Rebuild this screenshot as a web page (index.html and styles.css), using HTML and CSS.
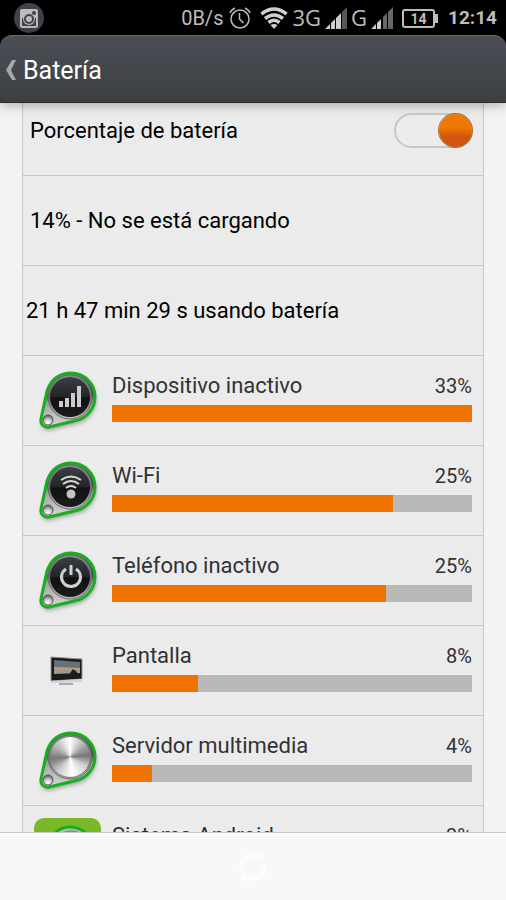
FILE: index.html
```
<!DOCTYPE html>
<html lang="es">
<head>
  <meta charset="UTF-8">
  <meta name="viewport" content="width=device-width, initial-scale=1">
  <title>Batería</title>
  <link rel="stylesheet" href="styles.css">
</head>
<body>

<!-- shared gradients and the badge base -->
<svg class="defs" width="0" height="0" aria-hidden="true">
  <defs>
    <linearGradient id="metal" x1="0" y1="0" x2="0" y2="1">
      <stop offset="0" stop-color="#77797b"/>
      <stop offset="0.4" stop-color="#3c3f41"/>
      <stop offset="0.55" stop-color="#a0a2a3"/>
      <stop offset="1" stop-color="#d8d8d8"/>
    </linearGradient>
    <linearGradient id="ring" x1="0" y1="0" x2="0" y2="1">
      <stop offset="0" stop-color="#8d9092"/>
      <stop offset="0.5" stop-color="#6a6d6f"/>
      <stop offset="1" stop-color="#c2c4c5"/>
    </linearGradient>
    <linearGradient id="dark" x1="0" y1="0" x2="0" y2="1">
      <stop offset="0" stop-color="#3c3f43"/>
      <stop offset="0.5" stop-color="#222427"/>
      <stop offset="0.52" stop-color="#101113"/>
      <stop offset="1" stop-color="#1b1c1e"/>
    </linearGradient>
    <radialGradient id="ball" cx="0.5" cy="0.8" r="0.8">
      <stop offset="0" stop-color="#ffffff"/>
      <stop offset="0.5" stop-color="#c4c5c6"/>
      <stop offset="1" stop-color="#4c4e50"/>
    </radialGradient>
    <symbol id="badge" viewBox="0 0 68 70">
      <path d="M13 24C17 12 26 6 37 6c13 0 24 10 24 24 0 12-9 22-21 24l-25 6c-5 1-9-3-8-8z" fill="#000" opacity="0.35" transform="translate(1 3)" filter="blur(2px)"/>
      <path d="M13 24C17 12 26 6 37 6c13 0 24 10 24 24 0 12-9 22-21 24l-25 6c-5 1-9-3-8-8z" fill="url(#metal)" stroke="#17b01c" stroke-width="3"/>
      <circle cx="36" cy="30" r="22" fill="url(#ring)" stroke="#66696b"/>
      <circle cx="14" cy="53" r="5" fill="url(#ball)" stroke="#555"/>
    </symbol>
  </defs>
</svg>

<div class="status">
  <svg class="insta" viewBox="0 0 30 32" aria-hidden="true">
    <circle cx="15" cy="16" r="15" fill="#3f4248"/>
    <path d="M8 7h14q2 0 2 2v15q0 2-2 2H8q-2 0-2-2V9q0-2 2-2z" fill="#bbb"/>
    <path d="M8 16h3v2a4 4 0 0 0 8 0v-2h3v8H8z" fill="#3f4248"/>
    <circle cx="15" cy="17" r="6" fill="#bbb"/>
    <circle cx="15" cy="17" r="4" fill="none" stroke="#3f4248" stroke-width="2"/>
    <circle cx="20" cy="11" r="2" fill="#3f4248"/>
  </svg>
  <span class="speed">0B/s</span>
  <svg class="alarm" viewBox="0 0 22 22" fill="none" stroke="#bdbdbd" stroke-width="1.5" aria-hidden="true">
    <circle cx="11" cy="12" r="9"/>
    <path d="M10.500 6v6l4 4M1 6q1-3 5-5M21 6q-1-3-5-5"/>
  </svg>
  <svg class="wifi" viewBox="0 0 28 22" fill="none" stroke="#cfcfcf" stroke-width="3.600" aria-hidden="true">
    <path d="M1.500 7Q14-3 26.500 7M5 11.500q9-7 18 0M8.500 15.500q5.500-4.500 11 0"/>
    <path d="M10.500 18q3.500-2 7 0L14 22z" fill="#cfcfcf" stroke="none"/>
  </svg>
  <span class="net">3G</span>
  <svg class="bars" viewBox="0 0 22 22" aria-hidden="true">
    <path d="M0 22l5-5v5zM6 16l4-4v10H6zM11 11l5-5v16h-5z" fill="#cfcfcf"/>
    <path d="M17 5l5-5v22h-5z" fill="#55575a"/>
  </svg>
  <span class="net">G</span>
  <svg class="bars" viewBox="0 0 22 22" aria-hidden="true">
    <path d="M0 22l5-5v5zM6 16l4-4v10H6z" fill="#cfcfcf"/>
    <path d="M12 10l4-4v16h-4zM17 5l5-5v22h-5z" fill="#66686c"/>
  </svg>
  <span class="battery">14</span>
  <span class="clock">12:14</span>
</div>

<header class="title-bar">
  <a href="#" class="back">
    <svg viewBox="0 0 10 20" aria-hidden="true"><path d="M6 0h4L5 10l5 10H6L0 10z" fill="#a5a6a7"/></svg>
    <h1>Batería</h1>
  </a>
</header>

<main class="content">
  <div class="list">
    <div class="row toggle-row">
      <label for="percent">Porcentaje de batería</label>
      <input type="checkbox" id="percent" class="switch" checked>
    </div>
    <div class="row charge">14% - No se está cargando</div>
    <div class="row elapsed">21 h 47 min 29 s usando batería</div>

    <div class="row usage">
      <svg class="icon" viewBox="0 0 68 70" aria-hidden="true">
        <use href="#badge"/>
        <circle cx="36" cy="30" r="20" fill="url(#dark)"/>
        <path d="M25 34h4v6h-4zM31 31h4v9h-4zM37 26h4v14h-4zM43 19h4v21h-4z" fill="#ccc"/>
      </svg>
      <div class="info">
        <div class="names"><span>Dispositivo inactivo</span><span class="value">33%</span></div>
        <div class="track"><div class="fill" style="width: 100%"></div></div>
      </div>
    </div>

    <div class="row usage">
      <svg class="icon" viewBox="0 0 68 70" aria-hidden="true">
        <use href="#badge"/>
        <circle cx="36" cy="30" r="20" fill="url(#dark)"/>
        <circle cx="37" cy="37" r="4.500" fill="#c4c4c4"/>
        <path d="M27 23q10-7 20 0M29 27q8-6 16 0M32 31q5-4 10 0" fill="none" stroke="#d8d8d8" stroke-width="2"/>
      </svg>
      <div class="info">
        <div class="names"><span>Wi-Fi</span><span class="value">25%</span></div>
        <div class="track"><div class="fill" style="width: 78%"></div></div>
      </div>
    </div>

    <div class="row usage">
      <svg class="icon" viewBox="0 0 68 70" aria-hidden="true">
        <use href="#badge"/>
        <circle cx="36" cy="30" r="20" fill="url(#dark)"/>
        <path d="M32 22a9.500 9.500 0 1 0 10 0M37 18v10" fill="none" stroke="#d0d0d0" stroke-width="3"/>
      </svg>
      <div class="info">
        <div class="names"><span>Teléfono inactivo</span><span class="value">25%</span></div>
        <div class="track"><div class="fill" style="width: 76%"></div></div>
      </div>
    </div>

    <div class="row usage">
      <svg class="icon" viewBox="0 0 68 70" aria-hidden="true">
        <path d="M17 20l31 2v20l-31 2z" fill="#17191b" stroke="#999"/>
        <path d="M20 23l26 2v14l-26 1z" fill="#6d7072"/>
        <path d="M20 30l26 1v3H20z" fill="#a3a5a6"/>
        <path d="M20 33h26" stroke="#d8843a"/>
        <path d="M20 34h26v3l-26 1z" fill="#a59a80"/>
        <path d="M20 37l26-1v4l-26 2zM36 40v-4l3-4 4 3v5z" fill="#1b1c1e"/>
        <path d="M17 44l31-2v3l-31 1z" fill="#d2d2d2"/>
        <path d="M25 46h14v2H25z" fill="#aaa"/>
      </svg>
      <div class="info">
        <div class="names"><span>Pantalla</span><span class="value">8%</span></div>
        <div class="track"><div class="fill" style="width: 24%"></div></div>
      </div>
    </div>

    <div class="row usage">
      <svg class="icon" viewBox="0 0 68 70" aria-hidden="true">
        <use href="#badge"/>
        <foreignObject x="15" y="9" width="42" height="42"><div class="brushed"></div></foreignObject>
      </svg>
      <div class="info">
        <div class="names"><span>Servidor multimedia</span><span class="value">4%</span></div>
        <div class="track"><div class="fill" style="width: 11%"></div></div>
      </div>
    </div>

    <div class="row usage">
      <svg class="icon" viewBox="0 0 68 70" aria-hidden="true">
        <rect x="0" y="1" width="67" height="67" rx="10" fill="#79b829"/>
        <path d="M18 22C21 14 28 10 36 10c12 0 22 9 22 20 0 10-7 18-17 20l-20 4c-5 1-7-2-6-6z" fill="#b9bbbc" stroke="#17b01c" stroke-width="3"/>
        <circle cx="37" cy="31" r="17" fill="#d0d2d3" stroke="#66696b"/>
      </svg>
      <div class="info">
        <div class="names"><span>Sistema Android</span><span class="value">3%</span></div>
        <div class="track"><div class="fill" style="width: 8%"></div></div>
      </div>
    </div>
  </div>
</main>

<footer class="bottom-bar">
  <button type="button" class="refresh" aria-label="Actualizar">
    <svg viewBox="0 0 32 32" fill="none" stroke="#fcfcfc" stroke-width="5" aria-hidden="true">
      <path d="M5 18A11 11 0 0 1 22 7M27 14a11 11 0 0 1-17 11"/>
      <path d="M20 2l8 1-3 10zM12 30l-8-1 3-10z" fill="#fcfcfc" stroke="none"/>
    </svg>
  </button>
</footer>

</body>
</html>
```
FILE: styles.css
```
* {
  box-sizing: border-box;
}
body {
  margin: 0;
  height: 100vh;
  display: flex;
  flex-direction: column;
  overflow: hidden;
  background-color: #000;
  font-family: Roboto, sans-serif;
}
.defs {
  position: absolute;
}

/* status bar */
.status {
  flex: none;
  height: 35px;
  display: flex;
  align-items: center;
  padding: 0 9px 0 14px;
  color: #bdbdbd;
}
.status svg {
  flex: none;
}
.insta {
  width: 30px;
  height: 32px;
  margin-right: auto;
}
.speed {
  font-size: 20px;
  margin-right: 6px;
}
.alarm {
  width: 22px;
  height: 22px;
  margin-right: 9px;
}
.wifi {
  width: 28px;
  height: 22px;
  margin-right: 4px;
}
.net {
  font-family: "Open Sans", sans-serif;
  font-size: 22px;
  line-height: 35px;
  margin-right: 4px;
}
.bars {
  width: 22px;
  height: 22px;
  margin-right: 4px;
}
.battery {
  position: relative;
  width: 33px;
  height: 19px;
  margin: 1px 13px 0 5px;
  border: 2px solid #bdbdbd;
  border-radius: 3px;
  font-size: 14px;
  font-weight: bold;
  line-height: 16px;
  text-align: center;
}
.battery::after {
  content: "";
  position: absolute;
  top: 3px;
  right: -5px;
  width: 4px;
  height: 9px;
  background-color: #bdbdbd;
}
.clock {
  font-size: 19px;
  font-weight: bold;
}

/* title */
.title-bar {
  flex: none;
  position: relative;
  height: 68px;
  padding: 2px 6px 0;
  border-top: 1px solid #6a6c70;
  border-bottom: 1px solid #2c2e30;
  border-radius: 12px 12px 0 0;
  background: linear-gradient(#4b4e56, #3c3f42);
  box-shadow: 0 2px 12px rgba(0, 0, 0, 0.3);
}
.back {
  display: flex;
  align-items: center;
  gap: 7px;
  height: 100%;
  color: #fff;
  text-decoration: none;
}
.back svg {
  width: 10px;
  height: 20px;
}
.back h1 {
  margin: 0;
  font-size: 25px;
  font-weight: normal;
}

/* list */
.content {
  flex: 1;
  min-height: 0;
  overflow: hidden;
  padding: 0 22px;
  background-color: #f3f3f3;
}
.list {
  border: solid #c6c6c6;
  border-width: 0 1px;
  background-color: #ebebeb;
}
.row {
  display: flex;
  align-items: center;
  height: 90px;
  border-bottom: 1px solid #c6c6c6;
  font-size: 22px;
  color: #000;
}
.toggle-row {
  justify-content: space-between;
  height: 73px;
  padding: 0 10px 18px 7px;
}
.charge {
  padding-left: 7px;
}
.elapsed {
  padding-left: 3px;
}
.switch {
  appearance: none;
  position: relative;
  width: 79px;
  height: 35px;
  margin: 0;
  border: 2px solid #c6c6c6;
  border-radius: 18px;
  background-color: #ececec;
}
.switch::after {
  content: "";
  position: absolute;
  top: -1px;
  left: -1px;
  width: 33px;
  height: 33px;
  border-radius: 50%;
  background: linear-gradient(#f07800 40%, #cf5510 70%);
  box-shadow: 0 0 0 1px #a8703c;
}
.switch:checked::after {
  left: auto;
  right: -1px;
}
.usage {
  align-items: flex-start;
  gap: 10px;
  padding: 11px 11px 0 11px;
  color: #303236;
}
.icon {
  flex: none;
  width: 68px;
  height: 70px;
}
.info {
  flex: 1;
}
.names {
  display: flex;
  justify-content: space-between;
  align-items: baseline;
  line-height: 38px;
}
.value {
  font-size: 20px;
}
.track {
  height: 17px;
  background-color: #b9b9b9;
}
.fill {
  height: 100%;
  background-color: #f07200;
}
.brushed {
  width: 42px;
  height: 42px;
  border: 1px solid #777;
  border-radius: 50%;
  background: conic-gradient(#fff, #b5b5b5 45deg, #777 85deg, #d0d0d0 120deg, #fff 170deg, #ccc 220deg, #777 265deg, #bbb 310deg, #fff);
}

/* bottom bar */
.bottom-bar {
  flex: none;
  display: flex;
  justify-content: center;
  align-items: center;
  height: 68px;
  border-top: 1px solid #c6c6c6;
  background-color: #f8f8f8;
}
.refresh {
  padding: 0;
  border: 0;
  background: none;
}
.refresh svg {
  display: block;
  width: 32px;
  height: 32px;
}
```
